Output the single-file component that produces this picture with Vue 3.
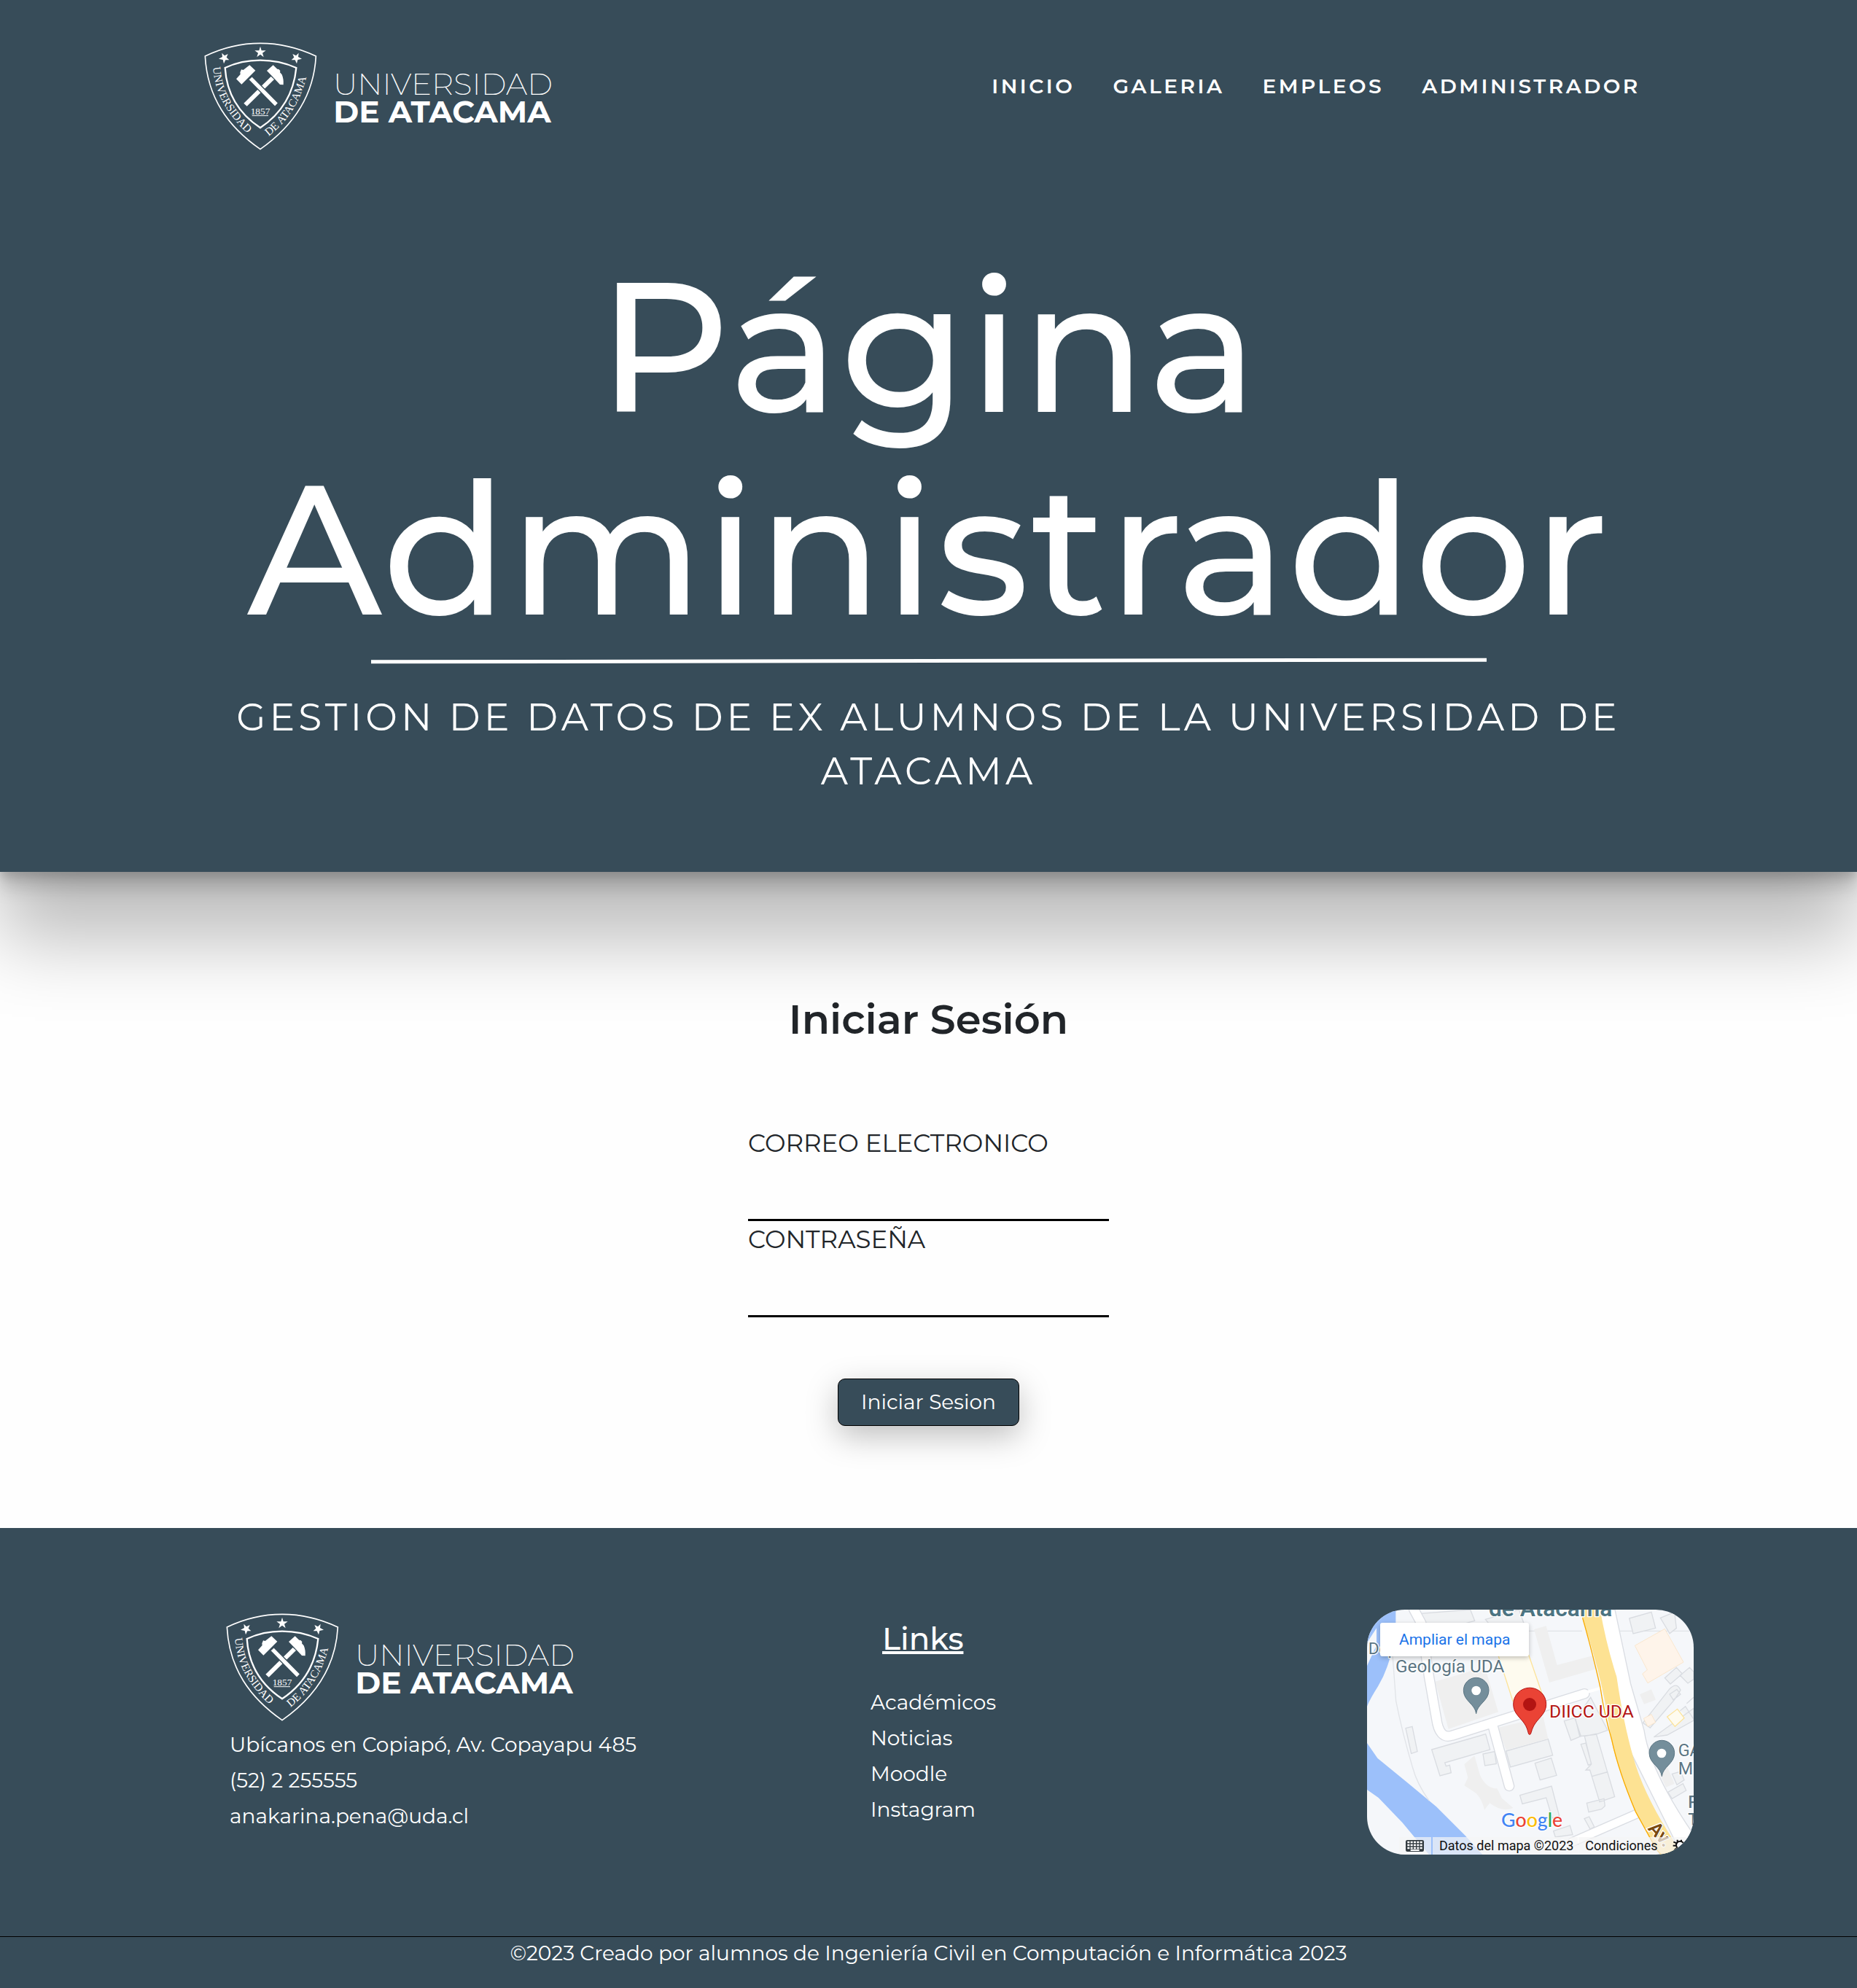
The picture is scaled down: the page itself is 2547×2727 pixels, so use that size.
<script setup>
import { ref } from 'vue'

const email = ref('')
const password = ref('')

const navItems = ['INICIO', 'GALERIA', 'EMPLEOS', 'ADMINISTRADOR']
const links = ['Académicos', 'Noticias', 'Moodle', 'Instagram']
</script>

<template>
  <div class="page">
    <svg class="defs" aria-hidden="true">
      <symbol id="uda-logo" viewBox="57 50 1440 450">
        <g fill="none" stroke="#fff">
          <path stroke-width="5" d="M61 110Q170 57 288 57Q405 57 517 110C508 280 420 400 288 493C155 400 70 280 61 110Z" />
          <path stroke-width="7" d="M143 158Q210 127 288 127Q366 127 436 158C425 270 370 350 288 405C205 350 150 270 143 158Z" />
          <path stroke-width="3" d="M254 355H321" />
        </g>
        <g fill="#fff">
          <path d="M288 70L293 87L311 87L297 97L302 114L288 103L274 114L279 97L265 87L283 87Z" />
          <path d="M130 97L141 108L155 101L149 115L160 126L145 126L138 141L134 125L117 121L132 113Z" />
          <path d="M446 97L435 108L421 101L427 115L416 126L431 126L438 141L442 125L459 121L444 113Z" />
          <path d="M332 194L345 206L233 316L220 304Z" />
          <path d="M315 170L341 147L358 163L364 164L370 170L369 177L377 186Q385 205 383 228L369 227L336 192Z" />
          <path stroke="#374c59" stroke-width="4" d="M239 207L254 193L362 303L348 318Z" />
          <path d="M189 204L206 185L205 177L210 165L218 167L244 147L268 169L211 226Z" />
        </g>
        <path id="uda-arc-left" fill="none" d="M93 156C103 270 150 350 256 448" />
        <path id="uda-arc-right" fill="none" d="M322 440C410 370 466 280 487 150" />
        <g fill="#fff" font-family="Liberation Serif, serif">
          <text font-size="46"><textPath href="#uda-arc-left">UNIVERSIDAD</textPath></text>
          <text font-size="46"><textPath href="#uda-arc-right">DE ATACAMA</textPath></text>
          <text x="288" y="350" font-size="40" text-anchor="middle">1857</text>
        </g>
        <g fill="#fff" font-family="Montserrat, sans-serif">
          <text x="588" y="269" font-size="126" font-weight="200">UNIVERSIDAD</text>
          <text x="589" y="383" font-size="127" font-weight="700">DE ATACAMA</text>
        </g>
      </symbol>
    </svg>

    <header class="hero">
      <div class="topbar">
        <a href="#" class="brand" aria-label="Universidad de Atacama">
          <svg class="logo" aria-hidden="true"><use href="#uda-logo" /></svg>
        </a>
        <nav class="nav">
          <a v-for="item in navItems" :key="item" href="#">{{ item }}</a>
        </nav>
      </div>
      <div class="masthead">
        <h1>Página Administrador</h1>
        <div class="rule"></div>
        <p>GESTION DE DATOS DE EX ALUMNOS DE LA UNIVERSIDAD DE ATACAMA</p>
      </div>
    </header>

    <main class="login">
      <h2>Iniciar Sesión</h2>
      <form @submit.prevent>
        <label for="email">CORREO ELECTRONICO</label>
        <input id="email" v-model="email" type="email" autocomplete="off" />
        <label for="password">CONTRASEÑA</label>
        <input id="password" v-model="password" type="password" autocomplete="off" />
        <button type="submit">Iniciar Sesion</button>
      </form>
    </main>

    <footer>
      <div class="columns">
        <div class="contact">
          <svg class="logo" role="img" aria-label="Universidad de Atacama"><use href="#uda-logo" /></svg>
          <address>
            <span>Ubícanos en Copiapó, Av. Copayapu 485</span>
            <span>(52) 2 255555</span>
            <span>anakarina.pena@uda.cl</span>
          </address>
        </div>
        <div class="links">
          <h3>Links</h3>
          <ul>
            <li v-for="link in links" :key="link"><a href="#">{{ link }}</a></li>
          </ul>
        </div>
        <div class="map">
          <svg class="map-art" viewBox="45 54 1344 1008">
            <path fill="#f5f7fa" d="M45 54H1389V1062H45Z" />
            <path fill="#9cc0fa" d="M45 54H163V190L137 260Q120 320 90 370Q58 420 45 452V285L84 200V130L45 190ZM45 603L88 665L210 765L330 865L450 985L520 1062H300L190 930L92 828L45 795Z" />
            <path fill="none" stroke="#e1e4e8" stroke-width="4" d="M150 240L164 430Q190 560 232 702Q250 770 300 840M163 142H930M1080 142H1389" />
            <g fill="#f0f2f4" stroke="#d9dce1" stroke-width="4">
              <path d="M265 70L470 54L488 100L300 150ZM532 94L670 54L690 110H545ZM204 542L231 535L252 638L227 646ZM311 630L533 566L551 630L365 684L370 698L385 694L391 725L345 738ZM522 648L570 638L577 688L530 696ZM617 636L790 587L809 653L635 702ZM736 686L803 665L825 736L757 755ZM674 818L804 780L836 903L807 912L782 828L684 853ZM856 512L900 500L925 575L884 592ZM903 505L965 415L1035 550L985 568L920 575ZM940 575L988 565L1034 722L970 740L962 714H945L968 690ZM970 740L1034 722L1064 824L1002 845ZM925 608L945 603L968 688L955 694ZM949 850L1020 832L1024 862L1010 875L957 887ZM939 914L959 906L980 948L963 957ZM812 965L880 942L891 980L820 990ZM1124 90L1215 64L1232 130L1140 153ZM1252 88L1310 64L1318 130L1290 152ZM1270 335L1318 292L1342 318L1293 360ZM1333 325L1372 292L1389 310V340L1365 357ZM1180 520L1290 380Q1320 350 1335 385L1310 425L1210 540ZM1225 578L1389 460V510L1280 570ZM1290 402L1320 382L1335 402L1305 425ZM1333 470L1355 452L1389 505M1360 440L1389 415M1283 805L1345 770L1358 798L1300 832ZM1300 730L1335 720L1350 755L1320 775Z" />
            </g>
            <g fill="#efefef">
              <path d="M325 350L530 290L585 475L380 545ZM732 135L782 121L827 282L975 243L988 298L795 354ZM583 540L770 495L790 585L617 632ZM1167 403L1215 382L1233 425L1185 443ZM1245 720L1280 700L1310 770L1275 785ZM445 690L487 655L510 735Q535 790 580 790L600 830L646 870Q600 890 550 850L528 878Q515 820 480 800L445 778L460 745Z" />
            </g>
            <path fill="#fefbef" stroke="#fce39a" stroke-width="4" d="M584 240H710L765 400L645 430Z" />
            <path fill="#fef4ea" stroke="#f9dfbc" stroke-width="2" d="M1147 202L1270 133L1347 270L1200 356L1178 318L1198 302ZM1183 502L1215 485L1232 518L1200 535Z" />
            <path fill="#fefbef" stroke="#fce39a" stroke-width="4" d="M1280 495L1322 463L1350 500L1312 535Z" />
            <g fill="none" stroke-linecap="round" stroke-linejoin="round">
              <path stroke="#dadde3" stroke-width="44" d="M238 54L268 110L300 330L330 500Q342 590 395 572L560 520L940 400M562 530L630 780" />
              <path stroke="#fff" stroke-width="36" d="M238 54L268 110L300 330L330 500Q342 590 395 572L560 520L940 400M562 530L630 780" />
              <path stroke="#fff" stroke-width="12" d="M940 396L1010 376" />
              <path stroke="#dadde3" stroke-width="40" d="M890 1010L1165 890" />
              <path stroke="#fff" stroke-width="32" d="M890 1010L1165 890" />
            </g>
            <path fill="#fff" stroke="#dadde3" stroke-width="4" d="M1065 54L1130 360L1185 550Q1210 720 1389 980V1062H1340L1060 500L950 54Z" />
            <path fill="#fde293" d="M930 54H1004Q1030 200 1072 330Q1100 520 1140 660Q1190 840 1345 1062H1250L1150 890Q1080 720 1050 590Q1015 330 930 88Z" />
            <path fill="none" stroke="#f9ab00" stroke-width="4" d="M932 88Q975 240 1005 375Q1020 480 1052 590Q1080 720 1150 885L1235 1040L1255 1062" />
            <g font-family="Roboto, sans-serif" paint-order="stroke" stroke="#fff" stroke-width="8" stroke-linejoin="round">
              <text x="546" y="81" font-size="95" font-weight="600" fill="#4c7482">de Atacama</text>
              <text x="50" y="236" font-size="68" fill="#5b7583">Dep</text>
              <text x="162" y="311" font-size="73" fill="#5b7583">Geología UDA</text>
              <text x="795" y="497" font-size="74" fill="#b31412">DIICC UDA</text>
              <text x="1325" y="656" font-size="70" fill="#5b7583">GA</text>
              <text x="1325" y="731" font-size="70" fill="#5b7583">MI</text>
              <text x="1366" y="869" font-size="70" font-weight="500" fill="#5b7583">P</text>
              <text x="1366" y="943" font-size="70" font-weight="500" fill="#5b7583">T</text>
            </g>
            <g fill="#748e9b" stroke="#5b7583" stroke-width="3">
              <path d="M494 482C490 442 442 430 442 386A52 52 0 0 1 546 386C546 430 498 442 494 482Z" />
              <path d="M1258 740C1254 700 1206 688 1206 644A52 52 0 0 1 1310 644C1310 688 1262 700 1258 740Z" />
            </g>
            <circle cx="494" cy="387" r="19" fill="#fff" />
            <circle cx="1257" cy="645" r="19" fill="#fff" />
            <path fill="#ea4335" stroke="#b31412" stroke-width="3" d="M714 568C706 568 710 548 692 522C674 496 647 480 647 443A67 67 0 0 1 782 443C782 480 755 496 737 522C719 548 722 568 714 568Z" />
            <circle cx="714" cy="444" r="27" fill="#b31412" />
            <text x="597" y="947" font-family="Lato, sans-serif" font-size="80" font-weight="500" paint-order="stroke" stroke="#fff" stroke-width="6"><tspan fill="#4285f4">G</tspan><tspan fill="#ea4335">o</tspan><tspan fill="#fbbc04">o</tspan><tspan fill="#4285f4">g</tspan><tspan fill="#34a853">l</tspan><tspan fill="#ea4335">e</tspan></text>
            <text font-family="Roboto, sans-serif" font-size="78" font-weight="600" fill="#7a4a10" paint-order="stroke" stroke="#fff" stroke-width="8" transform="translate(1198 956) rotate(48)">Av.</text>
            <path fill="#f5f5f5" fill-opacity=".7" d="M178 990H309V1062H178ZM315 990H912V1062H315ZM915 990H1389V1062H915Z" />
            <rect x="204" y="1002" width="75" height="48" rx="7" fill="#333b40" />
            <path fill="none" stroke="#fff" stroke-width="8" stroke-dasharray="9 4" d="M211 1011H273M211 1023H273M211 1035H273" />
            <path stroke="#fff" stroke-width="6" d="M224 1044H260" />
            <g font-family="Roboto, sans-serif" font-size="54" fill="#111">
              <text x="342" y="1043">Datos del mapa ©2023</text>
              <text x="943" y="1043">Condiciones</text>
            </g>
            <circle cx="1333" cy="1023" r="16" fill="none" stroke="#111" stroke-width="6" />
            <path fill="none" stroke="#111" stroke-width="6" d="M1306 1010L1319 1015M1304 1025H1317M1309 1044L1320 1034M1322 1001V1011M1338 1001V1009" />
          </svg>
          <a href="#" class="enlarge">Ampliar el mapa</a>
        </div>
      </div>
      <p class="copyright">©2023 Creado por alumnos de Ingeniería Civil en Computación e Informática 2023</p>
    </footer>
  </div>
</template>

<style>
body {
  margin: 0;
  background: #fefefe;
}
</style>

<style scoped>
.page {
  font-family: Montserrat, sans-serif;
  font-size: 28px;
  line-height: 49px;
  color: #212529;
}
h1, h2, h3, p, ul {
  margin: 0;
  padding: 0;
}
a {
  color: inherit;
  text-decoration: none;
}
.defs {
  position: absolute;
  width: 0;
  height: 0;
}
.logo {
  display: block;
  width: 480px;
  height: 150px;
}
.hero {
  background: #374c59;
  color: #fff;
  padding: 57px 11% 101px;
  box-shadow: 0 95px 96px rgba(0, 0, 0, 0.25), 0 7px 11px rgba(0, 0, 0, 0.12), 0 21px 23px rgba(0, 0, 0, 0.17);
}
.topbar {
  display: flex;
  justify-content: space-between;
  align-items: flex-start;
}
.nav {
  display: flex;
  gap: 52px;
  padding: 37px 17px 0 0;
  font-weight: 600;
  letter-spacing: 0.125em;
}
.masthead {
  display: flex;
  flex-direction: column;
  align-items: center;
  padding-top: 129px;
  text-align: center;
}
h1 {
  font-size: 252px;
  font-weight: 500;
  line-height: 278px;
  letter-spacing: 2px;
}
.rule {
  width: 77%;
  height: 5px;
  margin: 12px 0 38px;
  background: #fff;
  transform: rotate(-0.1deg);
}
.masthead p {
  font-size: 52px;
  font-weight: 400;
  line-height: 74px;
  letter-spacing: 5px;
}
.login {
  display: flex;
  flex-direction: column;
  align-items: center;
  padding: 168px 0 140px;
}
h2 {
  font-size: 56px;
  font-weight: 600;
  line-height: 68px;
}
form {
  display: flex;
  flex-direction: column;
  width: 495px;
  margin-top: 111px;
}
label {
  font-size: 34px;
  line-height: 50px;
}
input {
  height: 82px;
  box-sizing: border-box;
  padding: 0;
  border: 0;
  border-bottom: 3px solid #000;
  background: transparent;
  font: inherit;
  outline: none;
}
button {
  align-self: center;
  height: 65px;
  margin-top: 84px;
  padding: 0 31px;
  border: 1px solid #000;
  border-radius: 10px;
  background: #374c59;
  box-shadow: 0 14px 44px rgba(0, 0, 0, 0.25);
  color: #fff;
  font: inherit;
}
footer {
  background: #374c59;
  color: #fff;
}
.columns {
  display: grid;
  grid-template-columns: 884fr 681fr 448px;
  padding: 112px 224px 112px 310px;
}
address {
  display: flex;
  flex-direction: column;
  margin-top: 7px;
  padding-left: 5px;
  font-style: normal;
}
.contact {
  padding-top: 4px;
}
.links {
  padding-top: 10px;
}
h3 {
  padding-left: 16px;
  font-size: 42px;
  font-weight: 500;
  line-height: 60px;
  text-decoration: underline;
  text-decoration-thickness: 4px;
}
ul {
  margin-top: 33px;
  list-style: none;
}
.map {
  position: relative;
  height: 336px;
  overflow: hidden;
  border-radius: 52px;
}
.map-art {
  display: block;
  width: 100%;
  height: 100%;
}
.enlarge {
  position: absolute;
  top: 18px;
  left: 18px;
  padding: 0 26px;
  border-radius: 3px;
  background: #fff;
  box-shadow: 0 2px 6px rgba(0, 0, 0, 0.25);
  color: #1a73e8;
  font-family: Roboto, sans-serif;
  font-size: 21px;
  line-height: 46px;
}
.copyright {
  padding-bottom: 26px;
  border-top: 1px solid #000;
  line-height: 45px;
  text-align: center;
}
</style>
